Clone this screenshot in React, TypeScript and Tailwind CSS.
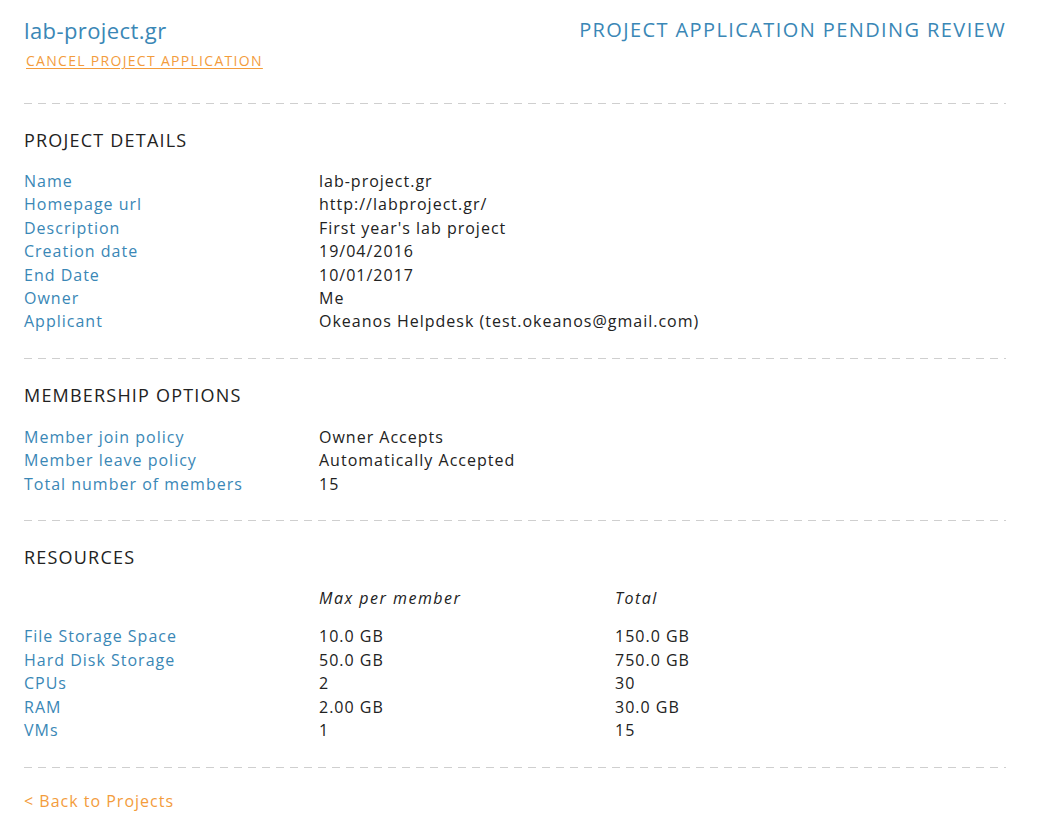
import React from 'react';

const blue = 'text-[#3a87b6]';

const Divider = () => (
  <div className="h-px w-full bg-[repeating-linear-gradient(to_right,#cfcfcf_0_8px,transparent_8px_14px)]" />
);

const SectionTitle = ({ children }: { children: React.ReactNode }) => (
  <h2 className="mt-[23px] text-[18px] leading-[26px] tracking-[1.2px] text-[#222]">{children}</h2>
);

type Row = [string, string, string?];

const Rows = ({ rows, three }: { rows: Row[]; three?: boolean }) => (
  <div className="text-[16px] leading-[23.4px] tracking-[1px]">
    {rows.map(([label, a, b]) => (
      <div
        key={label}
        className={three ? 'grid grid-cols-[295px_296px_1fr]' : 'grid grid-cols-[295px_1fr]'}
      >
        <span className={blue}>{label}</span>
        <span className="text-[#222]">{a}</span>
        {three && <span className="text-[#222]">{b}</span>}
      </div>
    ))}
  </div>
);

const details: Row[] = [
  ['Name', 'lab-project.gr'],
  ['Homepage url', 'http://labproject.gr/'],
  ['Description', "First year's lab project"],
  ['Creation date', '19/04/2016'],
  ['End Date', '10/01/2017'],
  ['Owner', 'Me'],
  ['Applicant', 'Okeanos Helpdesk (test.okeanos@gmail.com)'],
];

const membership: Row[] = [
  ['Member join policy', 'Owner Accepts'],
  ['Member leave policy', 'Automatically Accepted'],
  ['Total number of members', '15'],
];

const resources: Row[] = [
  ['File Storage Space', '10.0 GB', '150.0 GB'],
  ['Hard Disk Storage', '50.0 GB', '750.0 GB'],
  ['CPUs', '2', '30'],
  ['RAM', '2.00 GB', '30.0 GB'],
  ['VMs', '1', '15'],
];

export default function App() {
  return (
    <div className="min-h-[829px] bg-white font-['Open_Sans',sans-serif]">
      <div className="w-[982px] pl-6 box-content pt-[15px]">
        <div className="flex items-start justify-between">
          <h1 className={`text-[22px] leading-[30px] tracking-[0.4px] ${blue}`}>lab-project.gr</h1>
          <span className={`text-[20px] leading-[30px] tracking-[1.4px] ${blue}`}>
            PROJECT APPLICATION PENDING REVIEW
          </span>
        </div>
        <a
          href="#"
          className="mt-[7px] ml-[2px] inline-block text-[14px] leading-[18px] tracking-[1.3px] text-[#f39c3c] underline underline-offset-[2px]"
        >
          CANCEL PROJECT APPLICATION
        </a>

        <div className="mt-[31px]">
          <Divider />
        </div>
        <SectionTitle>PROJECT DETAILS</SectionTitle>
        <div className="mt-[17px] mb-6">
          <Rows rows={details} />
        </div>

        <Divider />
        <SectionTitle>MEMBERSHIP OPTIONS</SectionTitle>
        <div className="mt-[18px] mb-6">
          <Rows rows={membership} />
        </div>

        <Divider />
        <SectionTitle>RESOURCES</SectionTitle>
        <div className="mt-[17px] grid grid-cols-[295px_296px_1fr] text-[16px] leading-[23.4px] tracking-[1.5px] italic text-[#222]">
          <span />
          <span>Max per member</span>
          <span>Total</span>
        </div>
        <div className="mt-[15px] mb-6">
          <Rows rows={resources} three />
        </div>

        <Divider />
        <a href="#" className="mt-[22px] inline-block text-[16px] leading-[23.4px] tracking-[1px] text-[#f39c3c]">
          &lt; Back to Projects
        </a>
      </div>
    </div>
  );
}
